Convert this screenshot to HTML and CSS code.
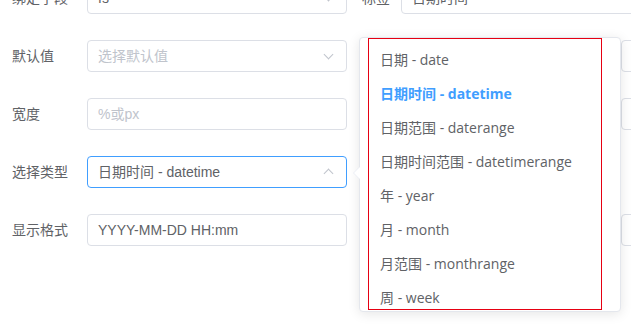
FILE: index.html
```html
<!DOCTYPE html>
<html lang="zh-CN">
<head>
    <meta charset="UTF-8">
    <title>属性配置</title>
    <link rel="stylesheet" href="styles.css">
</head>
<body>
    <div class="formulario">
        <div class="fila">
            <div class="campo">
                <label class="etiqueta">绑定字段</label>
                <div class="control select"><span class="valor">fs</span><span class="flecha abajo"></span></div>
            </div>
            <div class="campo derecha">
                <label class="etiqueta corta">标签</label>
                <div class="control ancho"><span class="valor">日期时间</span></div>
            </div>
        </div>
        <div class="fila">
            <div class="campo">
                <label class="etiqueta">默认值</label>
                <div class="control select"><span class="placeholder">选择默认值</span><span class="flecha abajo"></span></div>
            </div>
            <div class="campo derecha">
                <label class="etiqueta larga"></label>
                <div class="control ancho"></div>
            </div>
        </div>
        <div class="fila">
            <div class="campo">
                <label class="etiqueta">宽度</label>
                <div class="control"><span class="placeholder">%或px</span></div>
            </div>
            <div class="campo derecha">
                <label class="etiqueta larga"></label>
                <div class="control ancho"></div>
            </div>
        </div>
        <div class="fila fila-extra">
            <div class="campo">
                <label class="etiqueta">选择类型</label>
                <div class="control select activo"><span class="valor">日期时间 - datetime</span><span class="flecha arriba"></span></div>
            </div>
        </div>
        <div class="fila">
            <div class="campo">
                <label class="etiqueta">显示格式</label>
                <div class="control"><span class="valor">YYYY-MM-DD HH:mm</span></div>
            </div>
            <div class="campo derecha">
                <label class="etiqueta larga"></label>
                <div class="control ancho"></div>
            </div>
        </div>
    </div>

    <div class="desplegable">
        <div class="flechita"></div>
        <div class="lista-wrap">
            <ul class="lista">
                <li>日期 - date</li>
                <li class="seleccionado">日期时间 - datetime</li>
                <li>日期范围 - daterange</li>
                <li>日期时间范围 - datetimerange</li>
                <li>年 - year</li>
                <li>月 - month</li>
                <li>月范围 - monthrange</li>
                <li>周 - week</li>
            </ul>
        </div>
        <div class="marco"></div>
    </div>
</body>
</html>
```

FILE: styles.css
```css
* {
    margin: 0;
    padding: 0;
    box-sizing: border-box;
}
body {
    background-color: #fff;
    font-family: "Liberation Sans", "Noto Sans CJK SC", sans-serif;
    font-size: 14px;
    color: #606266;
    overflow: hidden;
    width: 631px;
    height: 329px;
    position: relative;
}
.formulario {
    margin-top: -18px;
}
.fila {
    display: flex;
    height: 32px;
    margin-bottom: 26px;
}
.fila-extra {
    margin-top: 2px;
}
.campo {
    display: flex;
    align-items: center;
    padding-left: 12px;
    width: 347px;
}
.campo.derecha {
    padding-left: 15px;
    width: auto;
    flex: 1;
}
.etiqueta {
    width: 75px;
    flex-shrink: 0;
    line-height: 32px;
}
.etiqueta.corta {
    width: 39px;
}
.etiqueta.larga {
    width: 259px;
}
.control {
    position: relative;
    width: 260px;
    height: 32px;
    border: 1px solid #dcdfe6;
    border-radius: 4px;
    padding: 0 10px;
    line-height: 30px;
    flex-shrink: 0;
    white-space: nowrap;
}
.control.ancho {
    width: 300px;
}
.control.activo {
    border-color: #409eff;
}
.placeholder {
    color: #c0c4cc;
}
.flecha {
    position: absolute;
    right: 14px;
    width: 7px;
    height: 7px;
    border-right: 1px solid #c0c4cc;
    border-bottom: 1px solid #c0c4cc;
}
.flecha.abajo {
    transform: rotate(45deg);
    top: 10px;
}
.flecha.arriba {
    transform: rotate(-135deg);
    top: 13px;
}

/* desplegable del select */
.desplegable {
    position: absolute;
    left: 359px;
    top: 37px;
    width: 262px;
    background: #fff;
    border: 1px solid #e4e7ed;
    border-radius: 4px;
    box-shadow: 0 2px 12px 0 rgba(0, 0, 0, 0.1);
}
.flechita {
    position: absolute;
    left: -7px;
    top: 129px;
    width: 0;
    height: 0;
    border-top: 6px solid transparent;
    border-bottom: 6px solid transparent;
    border-right: 6px solid #ebeef5;
}
.flechita::after {
    content: "";
    position: absolute;
    left: 1px;
    top: -6px;
    border-top: 6px solid transparent;
    border-bottom: 6px solid transparent;
    border-right: 6px solid #fff;
}
.lista-wrap {
    height: 273px;
    overflow: hidden;
}
.lista {
    list-style: none;
    padding: 5px 0;
}
.lista li {
    height: 34px;
    line-height: 34px;
    padding: 0 20px;
    font-family: "Open Sans", "Noto Sans CJK SC", sans-serif;
    font-size: 14px;
    color: #606266;
    white-space: nowrap;
}
.lista li.seleccionado {
    color: #409eff;
    font-weight: bold;
}
.marco {
    position: absolute;
    left: 8px;
    top: 0;
    width: 234px;
    height: 272px;
    border: 1px solid #e60012;
    pointer-events: none;
}
```
